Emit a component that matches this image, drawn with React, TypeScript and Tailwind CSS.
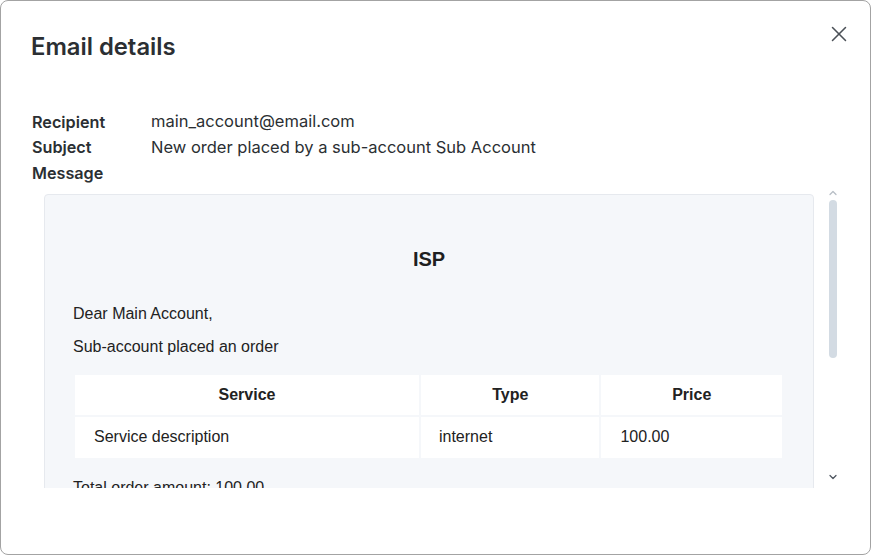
import { X, ChevronUp, ChevronDown } from 'lucide-react';

const rows = [
  { service: 'Service description', type: 'internet', price: '100.00' },
];

function DetailRow({ label, value }: { label: string; value?: string }) {
  return (
    <div className="flex h-[25.5px] items-center">
      <span className="w-[119px] shrink-0 text-[16.2px] font-semibold text-[#2b2f33]">{label}</span>
      {value && <span className="text-[16.5px] text-[#2b2f33]">{value}</span>}
    </div>
  );
}

export default function App() {
  return (
    <div className="h-[555px] w-[871px] bg-white font-['Inter',sans-serif]">
      <div className="flex h-full w-full flex-col rounded-lg border border-[#a3a3a3] bg-white">
        {/* Header */}
        <div className="flex items-start justify-between pl-[30px] pr-[14px] pt-[30px]">
          <h1 className="text-[23.8px] font-semibold leading-[32px] text-[#2b2f33]">Email details</h1>
          <button className="mt-[-14px] p-1 text-[#4b5057]">
            <X size={26} strokeWidth={1.4} />
          </button>
        </div>

        {/* Details */}
        <div className="mt-[46px] flex flex-col pl-[31px]">
          <DetailRow label="Recipient" value="main_account@email.com" />
          <DetailRow label="Subject" value="New order placed by a sub-account Sub Account" />
          <DetailRow label="Message" />
        </div>

        {/* Message body */}
        <div className="flex h-[302px] pl-[43px]">
          <div className="w-[770px] overflow-hidden pt-[8px]">
            <div className="rounded-t-[4px] border border-[#e6e9ee] bg-[#f5f7fa] px-[28px] pt-[49px] font-['Liberation_Sans',Arial,sans-serif] text-[16px] text-[#222]">
              <h2 className="mb-[30px] text-center text-[20px] font-bold leading-[30px] text-[#1f1f1f]">ISP</h2>
              <p className="leading-[20px]">Dear Main Account,</p>
              <p className="mt-[13px] leading-[20px]">Sub-account placed an order</p>
              <table className="mt-[16px] w-[711px] border-separate border-spacing-[2px]">
                <thead>
                  <tr>
                    <th className="h-[40px] w-[343px] bg-white text-center font-bold">Service</th>
                    <th className="h-[40px] w-[178px] bg-white text-center font-bold">Type</th>
                    <th className="h-[40px] w-[180px] bg-white text-center font-bold">Price</th>
                  </tr>
                </thead>
                <tbody>
                  {rows.map((r) => (
                    <tr key={r.service}>
                      <td className="h-[41px] bg-white pl-[19px]">{r.service}</td>
                      <td className="h-[41px] bg-white pl-[18px]">{r.type}</td>
                      <td className="h-[41px] bg-white pl-[19px]">{r.price}</td>
                    </tr>
                  ))}
                </tbody>
              </table>
              <p className="mt-[18px] leading-[20px]">Total order amount: 100.00</p>
              <p className="mt-[14px] pb-[40px] leading-[20px]">Thank you</p>
            </div>
          </div>

          {/* Scrollbar */}
          <div className="ml-[11px] flex w-[16px] flex-col items-center">
            <ChevronUp size={12} strokeWidth={2.5} className="mt-[1px] text-[#b7bec6]" />
            <div className="mt-[1px] h-[158px] w-[8px] rounded-full bg-[#d3dbe3]" />
            <div className="flex-1" />
            <ChevronDown size={12} strokeWidth={2.5} className="mb-[5px] text-[#4f5660]" />
          </div>
        </div>
      </div>
    </div>
  );
}
